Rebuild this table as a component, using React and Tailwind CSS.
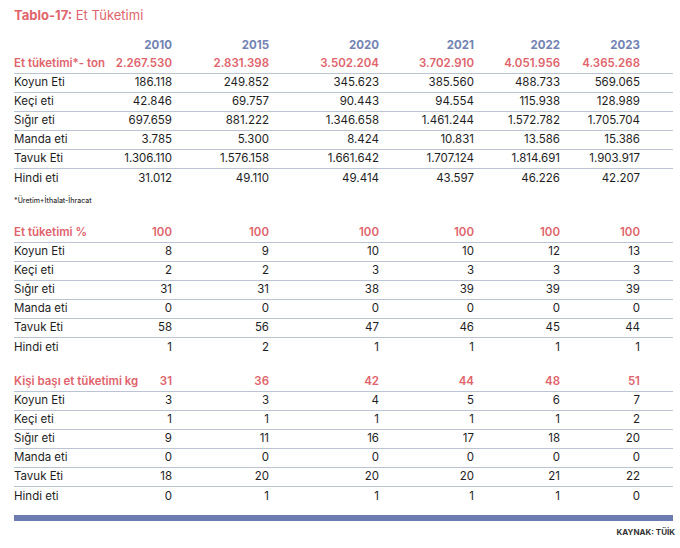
import React from "react";

const cols = "grid grid-cols-[100px_58px_97px_110px_95px_86px_80px_1fr] items-center";

const sec1 = {
  head: ["Et tüketimi*- ton", "2.267.530", "2.831.398", "3.502.204", "3.702.910", "4.051.956", "4.365.268"],
  rows: [
    ["Koyun Eti", "186.118", "249.852", "345.623", "385.560", "488.733", "569.065"],
    ["Keçi eti", "42.846", "69.757", "90.443", "94.554", "115.938", "128.989"],
    ["Sığır eti", "697.659", "881.222", "1.346.658", "1.461.244", "1.572.782", "1.705.704"],
    ["Manda eti", "3.785", "5.300", "8.424", "10.831", "13.586", "15.386"],
    ["Tavuk Eti", "1.306.110", "1.576.158", "1.661.642", "1.707.124", "1.814.691", "1.903.917"],
    ["Hindi eti", "31.012", "49.110", "49.414", "43.597", "46.226", "42.207"],
  ],
};
const sec2 = {
  head: ["Et tüketimi %", "100", "100", "100", "100", "100", "100"],
  rows: [
    ["Koyun Eti", "8", "9", "10", "10", "12", "13"],
    ["Keçi eti", "2", "2", "3", "3", "3", "3"],
    ["Sığır eti", "31", "31", "38", "39", "39", "39"],
    ["Manda eti", "0", "0", "0", "0", "0", "0"],
    ["Tavuk Eti", "58", "56", "47", "46", "45", "44"],
    ["Hindi eti", "1", "2", "1", "1", "1", "1"],
  ],
};
const sec3 = {
  head: ["Kişi başı et tüketimi kg", "31", "36", "42", "44", "48", "51"],
  rows: [
    ["Koyun Eti", "3", "3", "4", "5", "6", "7"],
    ["Keçi eti", "1", "1", "1", "1", "1", "2"],
    ["Sığır eti", "9", "11", "16", "17", "18", "20"],
    ["Manda eti", "0", "0", "0", "0", "0", "0"],
    ["Tavuk Eti", "18", "20", "20", "20", "21", "22"],
    ["Hindi eti", "0", "1", "1", "1", "1", "0"],
  ],
};

function Section({ data }) {
  return (
    <div>
      <div className={`${cols} h-[19px] border-b border-[#bcc3d4] text-[#e0646c] font-semibold`}>
        {data.head.map((c, i) => (
          <div key={i} className={i === 0 ? "whitespace-nowrap" : "text-right"}>{c}</div>
        ))}
        <div />
      </div>
      {data.rows.map((r, ri) => (
        <div
          key={ri}
          className={`${cols} h-[19px] text-[#1e1e1e] ${ri < data.rows.length - 1 ? "border-b border-[#bcc3d4]" : ""}`}
        >
          {r.map((c, i) => (
            <div key={i} className={i === 0 ? "whitespace-nowrap" : "text-right"}>{c}</div>
          ))}
          <div />
        </div>
      ))}
    </div>
  );
}

export default function App() {
  return (
    <div className="w-[680px] h-[548px] bg-white font-['Inter',sans-serif] text-[11.5px] leading-none">
      <div className="pl-[14px] pr-[7px]">
        <div className="pt-[9px] h-[37px] text-[13px] text-[#e0646c]">
          <span className="font-bold">Tablo-17:</span> <span>Et Tüketimi</span>
        </div>
        <div className={`${cols} h-[18px] text-[#7383b3] font-bold`}>
          <div />
          {["2010", "2015", "2020", "2021", "2022", "2023"].map((y) => (
            <div key={y} className="text-right">{y}</div>
          ))}
          <div />
        </div>
        <Section data={sec1} />
        <div className="h-[36px] pt-[9px] text-[7px] text-[#333] font-medium">*Üretim+İthalat-İhracat</div>
        <Section data={sec2} />
        <div className="h-[16px]" />
        <Section data={sec3} />
        <div className="mt-[9px] h-[6px] bg-[#6c7bb0]" />
        <div className="mt-[7px] -mr-[2px] text-right text-[8px] font-bold text-[#333]">KAYNAK: TÜİK</div>
      </div>
    </div>
  );
}
